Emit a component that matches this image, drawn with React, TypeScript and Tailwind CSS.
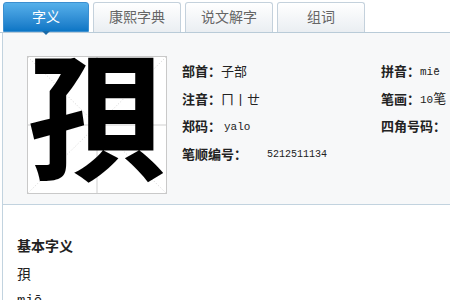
import React from "react";

const cjk = { fontFamily: '"Noto Sans CJK SC", "Noto Sans", sans-serif' };
const mono = { fontFamily: '"Liberation Mono", "DejaVu Sans Mono", "Noto Sans CJK SC", monospace' };

function Tab({ label, active }: { label: string; active?: boolean }) {
  if (active) {
    return (
      <div className="relative w-[86px] h-[30px] rounded-t-[3px] border border-[#3b8fd0] bg-gradient-to-b from-[#55b0ea] to-[#0b76c5] flex items-center justify-center text-white text-[14px] leading-none pb-[3px]">
        <span>{label}</span>
        <div className="absolute left-[38px] -bottom-[4px] w-0 h-0 border-l-[4px] border-r-[4px] border-t-[4px] border-l-transparent border-r-transparent border-t-[#1a6aa8]" />
      </div>
    );
  }
  return (
    <div className="w-[88px] h-[30px] rounded-t-[3px] border border-b-0 border-[#c4d1dc] bg-gradient-to-b from-[#ffffff] to-[#eaeef2] flex items-center justify-center text-[#666] text-[14px] leading-none pb-[3px]">
      <span>{label}</span>
    </div>
  );
}

function Row({ label, children, valueClass = "" }: { label: string; children?: React.ReactNode; valueClass?: string }) {
  return (
    <div className="flex items-center h-[27.5px] text-[13px] text-[#222] whitespace-nowrap">
      <span className="font-bold">{label}</span>
      <span className={valueClass}>{children}</span>
    </div>
  );
}

export default function App() {
  return (
    <div className="w-[450px] h-[300px] overflow-hidden bg-white" style={cjk}>
      <div className="flex items-end gap-[4px] pl-[3px] pt-[2px] h-[33px] border-b border-[#b9cbd8]">
        <Tab label="字义" active />
        <Tab label="康熙字典" />
        <Tab label="说文解字" />
        <Tab label="组词" />
      </div>
      <div className="ml-[2px] border-l border-[#c2d3df]">
        <div className="h-[172px] bg-[#f7f8f9] border-b border-[#c2d3df] flex items-start pl-[24px] pt-[23px]">
          <div className="relative w-[140px] h-[138px] bg-white border border-[#c9c9c9] shrink-0">
            <svg className="absolute inset-0" width="138" height="136" viewBox="0 0 138 136">
              <line x1="69" y1="0" x2="69" y2="136" stroke="#cfcfcf" strokeWidth="1" />
              <line x1="0" y1="68" x2="138" y2="68" stroke="#cfcfcf" strokeWidth="1" />
              <line x1="0" y1="0" x2="138" y2="136" stroke="#d4d4d4" strokeWidth="1" strokeDasharray="1 2" />
              <line x1="138" y1="0" x2="0" y2="136" stroke="#d4d4d4" strokeWidth="1" strokeDasharray="1 2" />
            </svg>
            <div className="absolute inset-0 flex items-center justify-center">
              <span className="relative -top-[16px] text-[140px] leading-none font-bold text-black">孭</span>
            </div>
          </div>
          <div className="ml-[15px] pt-[1px] grid grid-cols-[199px_auto] content-start">
            <Row label="部首：">子部</Row>
            <Row label="拼音：" valueClass="text-[11px]"><span style={mono}>miē</span></Row>
            <Row label="注音：">ㄇ丨ㄝ</Row>
            <Row label="笔画："><span style={mono} className="text-[11px]">10</span>笔</Row>
            <Row label="郑码：" valueClass="ml-[3px] text-[11px]"><span style={mono}>yalo</span></Row>
            <Row label="四角号码：" />
            <Row label="笔顺编号：" valueClass="ml-[20px] text-[10px]"><span style={mono}>5212511134</span></Row>
          </div>
        </div>
        <div className="pl-[14px] pt-[26px] text-[14px] text-[#222]">
          <div className="h-[28px] flex items-center font-bold">基本字义</div>
          <div className="h-[28px] flex items-center">孭</div>
          <div className="h-[28px] flex items-center" style={mono}>miē</div>
        </div>
      </div>
    </div>
  );
}
